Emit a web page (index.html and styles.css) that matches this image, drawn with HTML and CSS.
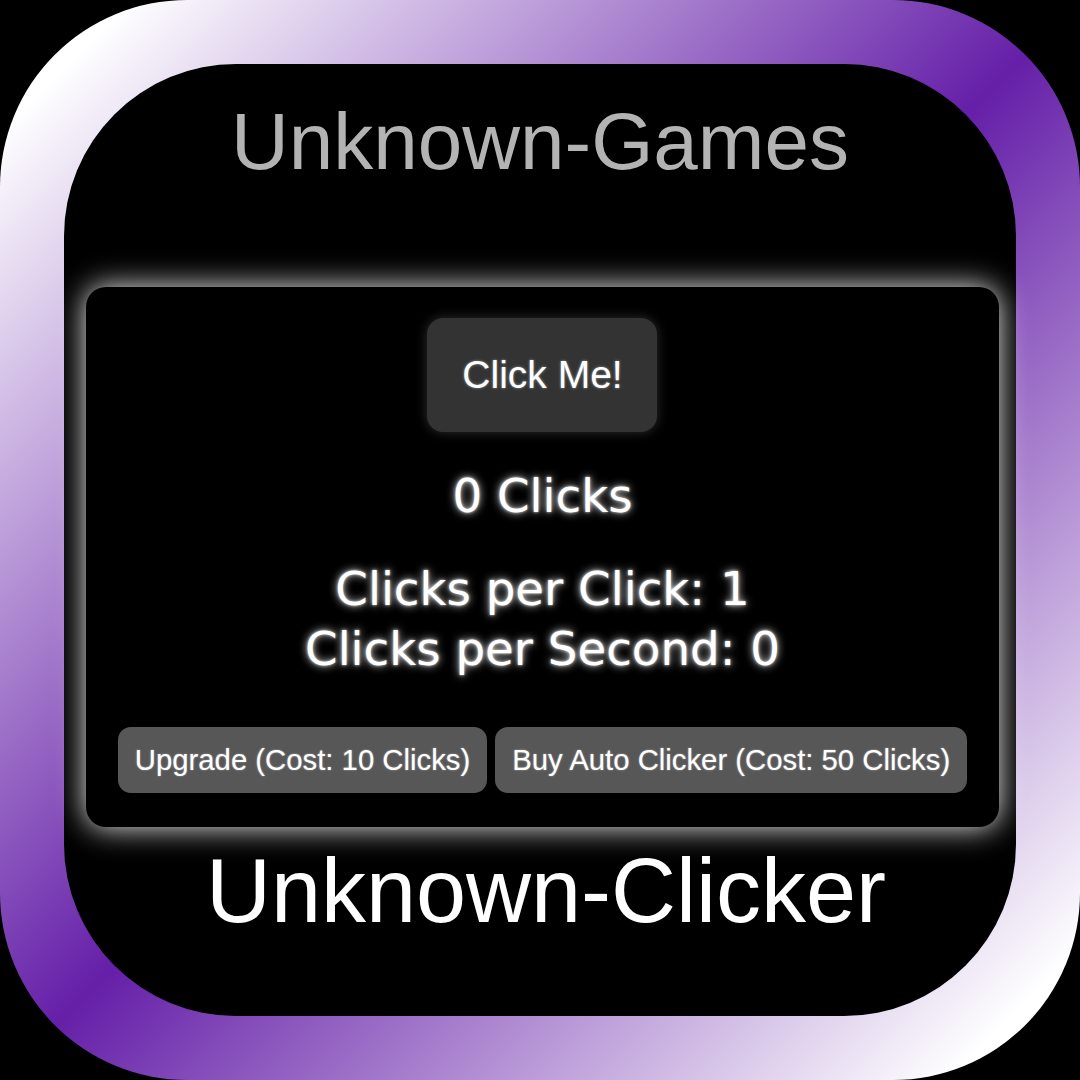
FILE: index.html
```html
<!DOCTYPE html>
<html>
<head>
<meta charset="utf-8">
<link rel="stylesheet" href="styles.css">
</head>
<body>
<div class="frame">
  <div class="screen">
    <h1 class="brand">Unknown-Games</h1>
    <div class="card">
      <button class="click-btn">Click Me!</button>
      <p class="count">0 Clicks</p>
      <p class="stats">Clicks per Click: 1<br>Clicks per Second: 0</p>
      <div class="shop">
        <button class="shop-btn">Upgrade (Cost: 10 Clicks)</button>
        <button class="shop-btn">Buy Auto Clicker (Cost: 50 Clicks)</button>
      </div>
    </div>
    <h2 class="title">Unknown-Clicker</h2>
  </div>
</div>
</body>
</html>
```

FILE: styles.css
```css
html, body {
  margin: 0;
  padding: 0;
  background: #000;
}
body {
  width: 1080px;
  height: 1080px;
  overflow: hidden;
}
.frame {
  width: 1080px;
  height: 1080px;
  box-sizing: border-box;
  padding: 64px;
  border-radius: 187px;
  background: linear-gradient(135deg, #ffffff 6%, #651fa8 50%, #ffffff 94%);
}
.screen {
  width: 952px;
  height: 952px;
  border-radius: 172px;
  background: #000;
  display: flex;
  flex-direction: column;
  align-items: center;
}
.brand {
  margin: 32px 0 0 0;
  font-family: "Liberation Sans", Arial, sans-serif;
  font-weight: normal;
  font-size: 80px;
  line-height: 92px;
  color: #b3b3b3;
}
.card {
  margin: 99px 0 0 5px;
  padding: 31px 32px 34px 32px;
  border-radius: 20px;
  background: #000;
  box-shadow: 0 0 30px rgba(255, 255, 255, 0.95);
  display: flex;
  flex-direction: column;
  align-items: center;
}
.click-btn {
  width: 230px;
  height: 114px;
  border: none;
  border-radius: 16px;
  background: #333333;
  color: #fff;
  font-family: "Liberation Sans", Arial, sans-serif;
  font-size: 39px;
  padding: 0;
  box-shadow: 0 0 12px rgba(255, 255, 255, 0.18);
  text-shadow: 0 0 3px rgba(255, 255, 255, 0.5);
}
.count, .stats {
  margin: 0;
  font-family: "DejaVu Sans", Verdana, sans-serif;
  font-size: 46.7px;
  line-height: 60px;
  color: #fff;
  text-align: center;
  text-shadow: 0 0 8px rgba(255, 255, 255, 0.9), 0 0 3px rgba(255, 255, 255, 0.8);
}
.count {
  margin-top: 34px;
}
.stats {
  margin-top: 33px;
}
.shop {
  margin-top: 48px;
  display: flex;
  gap: 8px;
}
.shop-btn {
  border: none;
  border-radius: 13px;
  background: #575757;
  color: #fff;
  font-family: "Liberation Sans", Arial, sans-serif;
  font-size: 29.3px;
  line-height: 34px;
  padding: 16px 17px;
  white-space: nowrap;
  text-shadow: 0 0 2px rgba(255, 255, 255, 0.5);
}
.title {
  margin: 13px 0 0 12px;
  font-family: "Liberation Sans", Arial, sans-serif;
  font-weight: normal;
  font-size: 90px;
  line-height: 102px;
  color: #fff;
}
```
